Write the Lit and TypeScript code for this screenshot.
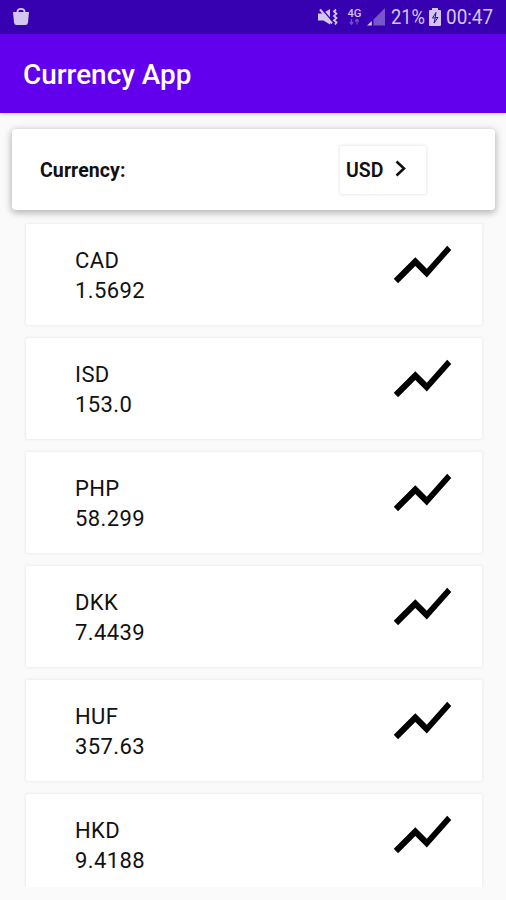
import { LitElement, html, css } from "lit";
import { customElement, property } from "lit/decorators.js";

interface Rate {
  code: string;
  value: string;
}

const RATES: Rate[] = [
  { code: "CAD", value: "1.5692" },
  { code: "ISD", value: "153.0" },
  { code: "PHP", value: "58.299" },
  { code: "DKK", value: "7.4439" },
  { code: "HUF", value: "357.63" },
  { code: "HKD", value: "9.4188" },
];

@customElement("status-bar")
class StatusBar extends LitElement {
  static styles = css`
    :host {
      display: flex;
      align-items: center;
      height: 34px;
      box-sizing: border-box;
      padding: 0 13px 0 12px;
      background: #3700b0;
      color: #d3c7f0;
      font-size: 19.5px;
      line-height: 34px;
    }
    svg { display: block; flex: none; fill: currentColor; }
    .spacer { flex: 1; }
    .mute { margin-right: 9px; }
    .net { margin-right: 5px; }
    .signal { margin-right: 6px; }
    .pct { width: 35px; margin-right: 3px; }
    .battery { margin-right: 5px; }
    .time { width: 47px; }
    .text { display: block; white-space: nowrap; transform-origin: 0 50%; padding-top: 2px; }
    .pct .text { transform: scaleX(0.94); }
    .time .text { transform: scaleX(0.97); }
    .tag { font-size: 11px; font-weight: 500; }
  `;

  render() {
    return html`
      <svg width="18" height="20" viewBox="0 0 18 20">
        <path d="M1 5h16l-1 10.500q-.2 2.500-2.700 2.500H4.700Q2.200 18 2 15.500z" />
        <path d="M5.500 7V4.500q0-2.700 3.500-2.700t3.500 2.700V7" fill="none" stroke="currentColor" stroke-width="1.800" />
      </svg>
      <span class="spacer"></span>
      <svg class="mute" width="20" height="18" viewBox="0 0 20 18">
        <path d="M0 5.500h4.500L12 1v15.500L5.500 12.500H0z" />
        <path d="M4 1l10.500 12.500" fill="none" stroke="#3700b0" stroke-width="1.400" />
        <path d="M2 1.500l12 14" fill="none" stroke="currentColor" stroke-width="2" />
        <path d="M18 1.500l-2 2 2.500 2.200-2.500 2.200 2.500 2.200-2.500 2.200 2.500 2.200-1.500 2" fill="none" stroke="currentColor" stroke-width="1.800" />
      </svg>
      <svg class="net" width="15" height="18" viewBox="0 0 15 18">
        <text class="tag" x="0.500" y="8.500" textLength="14" lengthAdjust="spacingAndGlyphs">4G</text>
        <path d="M4.500 11v5M2.700 14l1.800 2.200L6.300 14M10 16.500v-5M8.200 13.500l1.800-2.200 1.800 2.200" fill="none" stroke="currentColor" stroke-width="1.200" opacity=".4" />
      </svg>
      <svg class="signal" width="18" height="18" viewBox="0 0 18 18">
        <path d="M18 0v17.500H6.500V11.500z" opacity=".42" />
        <path d="M4.800 13v4.500H0z" />
      </svg>
      <span class="pct"><span class="text">21%</span></span>
      <svg class="battery" width="12" height="18" viewBox="0 0 12 18">
        <path d="M3 0h6v2H11q1 0 1 1v14q0 1-1 1H1q-1 0-1-1V3q0-1 1-1h2z" />
        <path d="M7 4.500L3.500 10h2.800L5 15l4-5.500H6.200z" fill="none" stroke="#3700b0" stroke-width="1" />
      </svg>
      <span class="time"><span class="text">00:47</span></span>
    `;
  }
}

@customElement("rate-card")
class RateCard extends LitElement {
  @property() code = "";
  @property() value = "";

  static styles = css`
    :host {
      display: flex;
      justify-content: space-between;
      flex: none;
      height: 101px;
      box-sizing: border-box;
      padding: 6px 25px 0 49px;
      border-radius: 2px;
      background: #fff;
      box-shadow: 0 0 3px 1px rgba(0, 0, 0, 0.055);
      color: #111;
      font-size: 22px;
      line-height: 30.3px;
      letter-spacing: 0.4px;
    }
    .labels { padding-top: 16px; }
    svg { display: block; fill: #000; }
  `;

  render() {
    return html`
      <div class="labels">
        <div>${this.code}</div>
        <div>${this.value}</div>
      </div>
      <svg width="69" height="69" viewBox="0 0 24 24">
        <path d="M3.500 18.490l6-6.010 4 4L22 6.920l-1.410-1.410-7.090 7.970-4-4L2 16.990z" />
      </svg>
    `;
  }
}

@customElement("app-root")
class AppRoot extends LitElement {
  static styles = css`
    :host {
      display: flex;
      flex-direction: column;
      height: 900px;
      overflow: hidden;
      background: #fafafa;
      font-family: Roboto, "Liberation Sans", sans-serif;
    }
    .bar {
      flex: none;
      height: 79px;
      box-sizing: border-box;
      padding: 1px 23px 0;
      background: #6200ee;
      box-shadow: 0 1px 4px rgba(0, 0, 0, 0.22);
      color: #fff;
      font-size: 27.9px;
      font-weight: 500;
      line-height: 80px;
    }
    .picker {
      display: flex;
      flex: none;
      align-items: center;
      justify-content: space-between;
      height: 81px;
      box-sizing: border-box;
      margin: 16px 11px 0 12px;
      padding: 0 69px 0 28px;
      border-radius: 4px;
      background: #fff;
      box-shadow: 0 2px 7px 1px rgba(0, 0, 0, 0.28);
      color: #111;
      font-size: 19.5px;
    }
    .label { font-weight: 700; padding-top: 2px; letter-spacing: 0.1px; }
    .select {
      display: flex;
      align-items: center;
      gap: 12px;
      width: 86px;
      height: 48px;
      box-sizing: border-box;
      padding: 2px 0 0 6px;
      border-radius: 2px;
      box-shadow: 0 0 3px 1px rgba(0, 0, 0, 0.09);
      font-weight: 600;
    }
    .select svg { margin-bottom: 3px; }
    .list {
      display: flex;
      flex-direction: column;
      gap: 13px;
      height: 677px;
      box-sizing: border-box;
      padding: 14px 24px 0 26px;
      overflow: hidden;
    }
  `;

  render() {
    return html`
      <status-bar></status-bar>
      <div class="bar">Currency App</div>
      <div class="picker">
        <span class="label">Currency:</span>
        <div class="select">
          <span>USD</span>
          <svg width="12" height="18" viewBox="0 0 12 18">
            <path d="M1.500 1.500L9 8.500 1.500 15.500" fill="none" stroke="#111" stroke-width="2.600" />
          </svg>
        </div>
      </div>
      <div class="list">
        ${RATES.map((r) => html`<rate-card .code=${r.code} .value=${r.value}></rate-card>`)}
      </div>
    `;
  }
}
